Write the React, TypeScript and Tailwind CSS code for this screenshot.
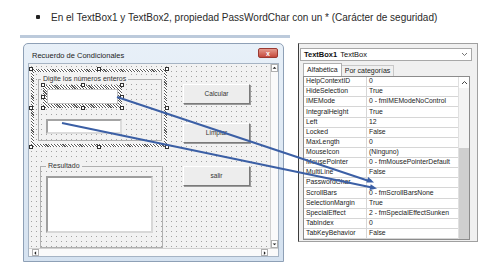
const props: [string, string][] = [
  ["HelpContextID", "0"],
  ["HideSelection", "True"],
  ["IMEMode", "0 - fmIMEModeNoControl"],
  ["IntegralHeight", "True"],
  ["Left", "12"],
  ["Locked", "False"],
  ["MaxLength", "0"],
  ["MouseIcon", "(Ninguno)"],
  ["MousePointer", "0 - fmMousePointerDefault"],
  ["MultiLine", "False"],
  ["PasswordChar", "*"],
  ["ScrollBars", "0 - fmScrollBarsNone"],
  ["SelectionMargin", "True"],
  ["SpecialEffect", "2 - fmSpecialEffectSunken"],
  ["TabIndex", "0"],
  ["TabKeyBehavior", "False"],
];

const dots =
  "bg-[#f2f2f2] bg-[radial-gradient(circle,#a2a2a2_0.55px,transparent_0.85px)] bg-[length:5px_5px]";
const hatch = "bg-[repeating-linear-gradient(45deg,#5a5a5a_0_0.8px,#ffffff_0.8px_2px)]";

// 8 small sizing handles around a selected control
function Handles() {
  const h = "absolute w-[4px] h-[4px] bg-white border border-[#333]";
  return (
    <>
      <span className={`${h} -left-[2px] -top-[2px]`} />
      <span className={`${h} left-1/2 -ml-[2px] -top-[2px]`} />
      <span className={`${h} -right-[2px] -top-[2px]`} />
      <span className={`${h} -left-[2px] top-1/2 -mt-[2px]`} />
      <span className={`${h} -right-[2px] top-1/2 -mt-[2px]`} />
      <span className={`${h} -left-[2px] -bottom-[2px]`} />
      <span className={`${h} left-1/2 -ml-[2px] -bottom-[2px]`} />
      <span className={`${h} -right-[2px] -bottom-[2px]`} />
    </>
  );
}

function Boton({ label, top }: { label: string; top: string }) {
  return (
    <div
      className={`absolute left-[154px] ${top} w-[67px] h-[20px] flex items-center justify-center bg-[#ededed] border border-t-white border-l-white border-r-[#7a7a7a] border-b-[#7a7a7a] shadow-[1px_1px_0_#9a9a9a] text-[6.5px] text-[#333]`}
    >
      {label}
    </div>
  );
}

function Tri({ dir }: { dir: "up" | "down" | "left" | "right" }) {
  const pts =
    dir === "up" ? "1,5 4,2 7,5" : dir === "down" ? "1,3 4,6 7,3" : dir === "left" ? "5,1 2,4 5,7" : "3,1 6,4 3,7";
  return (
    <svg width="8" height="8" viewBox="0 0 8 8">
      <polygon points={pts} fill="#222" />
    </svg>
  );
}

export default function App() {
  return (
    <div className="relative w-[480px] h-[270px] bg-white overflow-hidden font-['Liberation_Sans',Arial,sans-serif]">
      {/* enunciado */}
      <div className="h-[35px] flex items-center pl-[36px] pb-[1px]">
        <span className="w-[4px] h-[4px] rounded-[1px] bg-[#222] mr-[11px]" />
        <span className="text-[10px] text-[#2a2a2a]">
          En el TextBox1 y TextBox2, propiedad PassWordChar con un * (Carácter de seguridad)
        </span>
      </div>

      <div className="flex">
        {/* formulario */}
        <div className="ml-[20px] w-[270px]">
          <div className="h-[3px] bg-[#bccadb]" />
          <div className="mt-[5px] ml-[3px] w-[261px] h-[219px] rounded-t-[5px] border border-[#8ea0b6] bg-gradient-to-b from-[#e8f0f8] to-[#d5e2f0] flex flex-col">
            <div className="h-[19px] flex items-center pl-[8px] pr-[5px] pt-[4px]">
              <span className="text-[7.5px] text-[#1c1c1c]">Recuerdo de Condicionales</span>
              <div className="ml-auto -mt-[5px] w-[20px] h-[10px] rounded-[2px] bg-gradient-to-b from-[#e49a8e] to-[#c4483c] border border-[#9a3a32] flex items-center justify-center text-[7px] font-bold text-white leading-none">
                x
              </div>
            </div>
            <div className="mx-[4px] h-[194px] flex flex-col border border-[#a6b4c4] bg-white">
              <div className="flex h-[184px]">
                {/* lienzo */}
                <div className={`relative w-[243px] h-full ${dots}`}>
                  {/* frame seleccionado */}
                  <div className={`absolute left-[2px] top-[5px] w-[136px] h-[78px] ${hatch}`}>
                    <div className={`absolute inset-[3px] ${dots}`}>
                      <div className="absolute left-[4px] top-[7px] w-[124px] h-[62px] border border-[#b0b0b0]" />
                      <span className="absolute left-[7px] top-[2px] px-[2px] bg-[#f2f2f2] text-[7px] leading-[10px] text-[#333]">
                        Digite los números enteros
                      </span>
                      <div className={`absolute left-[9px] top-[13px] w-[79px] h-[23px] ${hatch}`}>
                        <div className="absolute inset-[4px] bg-white border border-[#c4c4c4]" />
                        <Handles />
                      </div>
                      <div className="absolute left-[12px] top-[47px] w-[76px] h-[15px] bg-white border-2 border-t-[#a4a4a4] border-l-[#a4a4a4] border-r-[#dcdcdc] border-b-[#dcdcdc]" />
                    </div>
                    <Handles />
                  </div>

                  <Boton label="Calcular" top="top-[20px]" />
                  <Boton label="Limpiar" top="top-[59px]" />
                  <Boton label="salir" top="top-[102px]" />

                  {/* resultado */}
                  <div className="absolute left-[11px] top-[102px] w-[123px] h-[82px] border border-[#b0b0b0]" />
                  <span className="absolute left-[17px] top-[97px] px-[2px] bg-[#f2f2f2] text-[7px] leading-[10px] text-[#333]">
                    Resultado
                  </span>
                  <div className="absolute left-[17px] top-[112px] w-[107px] h-[57px] bg-white border-2 border-t-[#9e9e9e] border-l-[#9e9e9e] border-r-[#d8d8d8] border-b-[#d8d8d8]" />
                </div>
                {/* barra vertical */}
                <div className="flex-1 flex flex-col items-center justify-between bg-[#fafafa] border-l border-[#d0d0d0]">
                  <div className="w-[7px] h-[8px] border border-[#b0b0b0] bg-white flex items-center justify-center">
                    <Tri dir="up" />
                  </div>
                  <div className="w-[7px] h-[8px] border border-[#b0b0b0] bg-white flex items-center justify-center">
                    <Tri dir="down" />
                  </div>
                </div>
              </div>
              {/* barra horizontal */}
              <div className="flex-1 flex items-center pl-[3px] pr-[10px] bg-[#fafafa] border-t border-[#d0d0d0]">
                <div className="w-[7px] h-[7px] border border-[#b0b0b0] bg-white flex items-center justify-center">
                  <Tri dir="left" />
                </div>
                <div className="ml-auto w-[7px] h-[7px] border border-[#b0b0b0] bg-white flex items-center justify-center">
                  <Tri dir="right" />
                </div>
              </div>
            </div>
          </div>
        </div>

        {/* ventana de propiedades */}
        <div className="ml-[8px] mt-[8px] w-[180px] h-[199px] border border-[#a0a0a0] border-l-[#3c3c3c] bg-[#f0f0f0] flex flex-col pl-[1px]">
          <div className="mt-[4px] w-[172px] h-[13px] bg-white border border-[#a8a8a8] flex items-center px-[3px] text-[7.5px] text-[#111]">
            <span className="font-bold">TextBox1</span>
            <span className="ml-[3px]">TextBox</span>
            <svg className="ml-auto" width="7" height="5" viewBox="0 0 7 5">
              <polyline points="1,1 3.5,3.5 6,1" fill="none" stroke="#666" strokeWidth="0.9" />
            </svg>
          </div>
          <div className="mt-[2px] ml-[3px] flex items-end h-[13px] text-[7px] text-[#222]">
            <div className="h-[13px] px-[3px] flex items-center bg-white border border-b-0 border-[#b0b0b0]">Alfabética</div>
            <div className="h-[11px] px-[3px] flex items-center border-t border-r border-[#c8c8c8]">Por categorías</div>
          </div>
          <div className="ml-[3px] w-[167px] h-[164px] border border-[#8c8c8c] bg-white flex">
            <div className="flex-1 flex flex-col">
              {props.map(([k, v]) => (
                <div key={k} className="h-[10.15px] flex border-b border-[#d6d6d6] text-[6.8px] leading-none text-[#1a1a1a]">
                  <div className="w-[63px] pl-[2px] flex items-center border-r border-[#d6d6d6] whitespace-nowrap overflow-hidden">{k}</div>
                  <div className="flex-1 pl-[2px] flex items-center whitespace-nowrap overflow-hidden">{v}</div>
                </div>
              ))}
            </div>
            <div className="w-[11px] flex flex-col border-l border-[#e0e0e0]">
              <div className="h-[11px] flex items-center justify-center">
                <svg width="7" height="5" viewBox="0 0 7 5">
                  <polyline points="1,4 3.5,1.5 6,4" fill="none" stroke="#444" strokeWidth="1" />
                </svg>
              </div>
              <div className="h-[60px] bg-[#f4f4f4]" />
              <div className="flex-1 bg-[#cfcfcf]" />
            </div>
          </div>
        </div>
      </div>

      {/* flechas */}
      <svg className="absolute inset-0 pointer-events-none" width="480" height="270" viewBox="0 0 480 270">
        <line x1="117" y1="97" x2="369" y2="181" stroke="#3b5fa5" strokeWidth="2" />
        <polygon points="374,182.5 366.4,182.6 368.2,176.9" fill="#3b5fa5" />
        <line x1="62" y1="123" x2="372" y2="187.5" stroke="#3b5fa5" strokeWidth="2" />
        <polygon points="377,188.5 369.5,190 370.7,184.2" fill="#3b5fa5" />
      </svg>
    </div>
  );
}
